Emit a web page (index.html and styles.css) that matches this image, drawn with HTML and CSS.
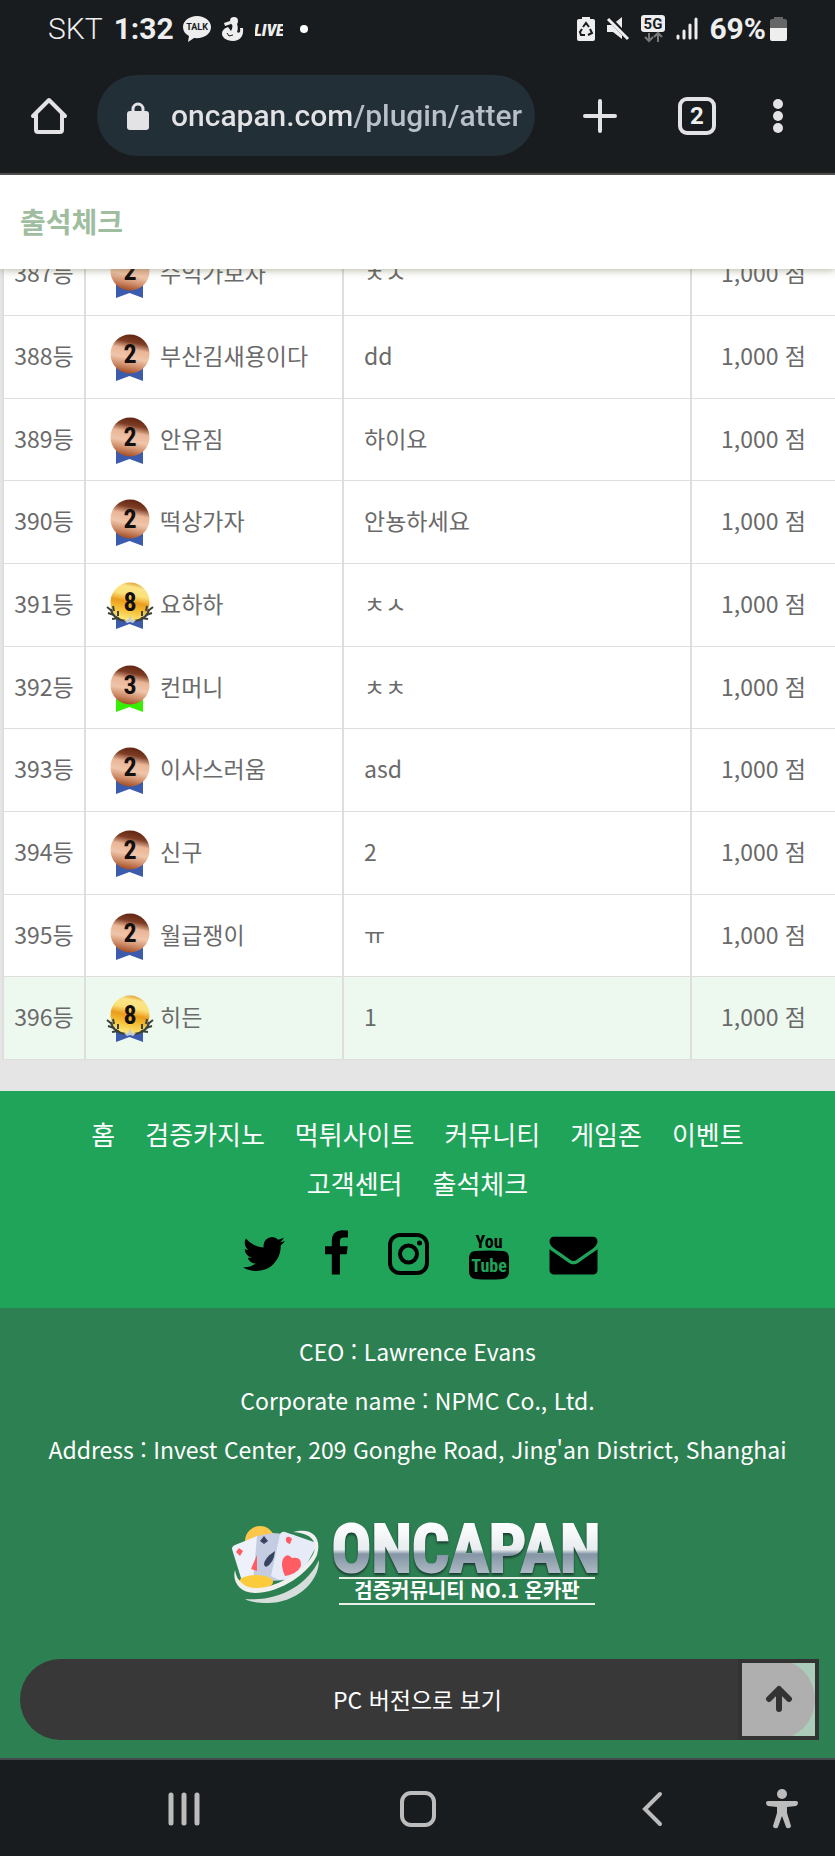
FILE: index.html
```html
<!DOCTYPE html>
<html lang="ko">
<head>
<meta charset="utf-8">
<meta name="viewport" content="width=device-width, initial-scale=1">
<title>출석체크</title>
<link rel="stylesheet" href="styles.css">
</head>
<body>
<svg class="sprite" aria-hidden="true">
  <defs>
    <linearGradient id="bronze" x1="0.6" y1="0" x2="0.4" y2="1">
      <stop offset="0" stop-color="#5f2410"/><stop offset="0.2" stop-color="#7d3d25"/>
      <stop offset="0.38" stop-color="#e9b596"/><stop offset="0.6" stop-color="#f0c5aa"/>
      <stop offset="0.8" stop-color="#cf8d6a"/><stop offset="1" stop-color="#a04a20"/>
    </linearGradient>
    <linearGradient id="gold" x1="0.6" y1="0" x2="0.4" y2="1">
      <stop offset="0" stop-color="#e0a030"/><stop offset="0.12" stop-color="#fbe488"/>
      <stop offset="0.32" stop-color="#fbe078"/><stop offset="0.5" stop-color="#eb9c1c"/>
      <stop offset="0.7" stop-color="#f5bf35"/><stop offset="1" stop-color="#fff088"/>
    </linearGradient>
    <linearGradient id="chrome" x1="0" y1="0" x2="0" y2="1">
      <stop offset="0.15" stop-color="#ffffff"/><stop offset="0.5" stop-color="#e8ecef"/>
      <stop offset="0.56" stop-color="#8495a5"/><stop offset="0.85" stop-color="#b5c0c9"/>
    </linearGradient>
    <symbol id="medal2" viewBox="0 0 48 48">
      <path d="M10 30h27v17l-13.500-5L10 47z" fill="#3c5bac"/>
      <circle cx="24" cy="20" r="19.500" fill="url(#bronze)"/>
      <text class="medal-no" x="24" y="29">2</text>
    </symbol>
    <symbol id="medal3" viewBox="0 0 48 48">
      <path d="M10 30h27v17l-13.500-5L10 47z" fill="#38ee05"/>
      <circle cx="24" cy="20" r="19.500" fill="url(#bronze)"/>
      <text class="medal-no" x="24" y="29">3</text>
    </symbol>
    <symbol id="medal8" viewBox="0 0 48 48">
      <path d="M10 30h27v17l-13.500-5L10 47z" fill="#3c5bac"/>
      <circle cx="24" cy="20" r="19.500" fill="url(#gold)"/>
      <g fill="none" stroke="#3d4237" stroke-width="2">
        <path d="M5 27c1 6 6 11 15 12M43 27c-1 6-6 11-15 12"/>
        <path d="M1 25l5 4M2 31l6 2M6 37l7-1M7 24l1 5M12 29l0 5M47 25l-5 4M46 31l-6 2M42 37l-7-1M41 24l-1 5M36 29l0 5"/>
      </g>
      <path d="M24 34l2 4 4 0-3 3-3-1-3 1-3-3 4 0z" fill="#c6cad2"/>
      <text class="medal-no" x="24" y="29">8</text>
    </symbol>
  </defs>
</svg>

<header class="chrome">
  <div class="status">
    <div class="status-side">
      <span class="carrier">SKT</span>
      <span class="clock">1:32</span>
      <svg class="ic-talk" width="28" height="26" viewBox="0 0 28 26"><path d="M14 0C6 0 0 5 0 11c0 4 2 7 6 9l-1 6 6-4c10 1 17-4 17-11C28 5 22 0 14 0z" fill="#eee"/><text x="14" y="14" class="t-talk">TALK</text></svg>
      <svg class="ic-carrot" width="22" height="26" viewBox="0 0 22 26" fill="#eee"><circle cx="12" cy="5" r="4"/><path d="M10 8h5c1 3 1 5 0 8 2 2 4 0 3-4l3 0c1 8-3 13-10 13-7 0-11-4-11-7 0-4 3-6 6-7l3 4c1-2 2-4 1-7z"/><path d="M2 7l6-2 1 3-6 2z"/><path d="M5 17l2 3 4-1" fill="none" stroke="#191c1e" stroke-width="1"/></svg>
      <svg width="28" height="26" viewBox="0 0 28 26"><text x="14" y="20" class="t-live">LIVE</text></svg>
      <svg class="ic-dot" width="8" height="8" viewBox="0 0 8 8"><circle cx="4" cy="4" r="4" fill="#fff"/></svg>
    </div>
    <div class="status-side status-right">
      <svg width="18" height="26" viewBox="0 0 18 26"><path d="M5 1h8v2h3q2 0 2 2v18q0 2-2 2H2q-2 0-2-2V5q0-2 2-2h3z" fill="#eee"/><path d="M6 11l3-4 3 4M13 13l2 4-4 2M8 19H4l-1-3 2-3" fill="none" stroke="#191c1e" stroke-width="2"/></svg>
      <svg width="24" height="26" viewBox="0 0 24 26"><path d="M1 9h5l10-8v22l-9-7H1z" fill="#eee"/><path d="M1 0l22 23" stroke="#191c1e" stroke-width="5"/><path d="M2 3l20 20" stroke="#eee" stroke-width="3"/></svg>
      <svg width="24" height="28" viewBox="0 0 24 28"><rect width="24" height="17" rx="3" fill="#eee"/><text x="12" y="14" class="t-5g">5G</text><path d="M8 18v8m-4-4l4 4 4-4M17 27v-9m-4 4l4-4 4 4" stroke="#777" stroke-width="2" fill="none"/></svg>
      <svg width="22" height="24" viewBox="0 0 22 24" stroke="#eee" stroke-width="3" stroke-linecap="round"><path d="M2 19v2M8 14v7M14 8v13M20 2v19"/></svg>
      <span class="percent">69%</span>
      <svg width="17" height="26" viewBox="0 0 17 26"><path d="M4 1h9v2h2q2 0 2 2v7H0V5q0-2 2-2h2z" fill="#666"/><path d="M0 12h17v11q0 2-2 2H2q-2 0-2-2z" fill="#eee"/></svg>
    </div>
  </div>
  <div class="toolbar">
    <button class="icon-btn" type="button" aria-label="홈페이지"><svg width="38" height="38" viewBox="0 0 38 38" fill="none" stroke="#e3e3e5" stroke-width="4" stroke-linecap="round" stroke-linejoin="round"><path d="M3 19L19 3l16 16M6 17v16q0 2 2 2h22q2 0 2-2V17"/></svg></button>
    <label class="omnibox">
      <svg width="22" height="28" viewBox="0 0 22 28"><rect y="9" width="22" height="19" rx="3" fill="#e3e3e5"/><path d="M6 10V7a5 5 0 0 1 10 0v3" fill="none" stroke="#e3e3e5" stroke-width="3"/></svg>
      <input class="url" type="text" aria-label="주소" value="oncapan.com/plugin/atter">
    </label>
    <button class="icon-btn" type="button" aria-label="새 탭"><svg width="34" height="34" viewBox="0 0 34 34" stroke="#e3e3e5" stroke-width="4" stroke-linecap="round"><path d="M17 2v30M2 17h30"/></svg></button>
    <button class="icon-btn" type="button" aria-label="탭 목록"><span class="tab-count">2</span></button>
    <button class="icon-btn" type="button" aria-label="메뉴"><svg width="10" height="34" viewBox="0 0 10 34" fill="#e3e3e5"><circle cx="5" cy="5" r="5"/><circle cx="5" cy="17" r="5"/><circle cx="5" cy="29" r="5"/></svg></button>
  </div>
</header>

<h1 class="page-title">출석체크</h1>

<main class="board">
  <table class="ranks">
    <colgroup><col class="c-rank"><col class="c-name"><col><col class="c-point"></colgroup>
    <tbody>
      <tr><td>387등</td><td><div class="member"><svg class="medal"><use href="#medal2"/></svg>수익가보자</div></td><td>ㅊㅅ</td><td>1,000 점</td></tr>
      <tr><td>388등</td><td><div class="member"><svg class="medal"><use href="#medal2"/></svg>부산김새용이다</div></td><td>dd</td><td>1,000 점</td></tr>
      <tr><td>389등</td><td><div class="member"><svg class="medal"><use href="#medal2"/></svg>안유짐</div></td><td>하이요</td><td>1,000 점</td></tr>
      <tr><td>390등</td><td><div class="member"><svg class="medal"><use href="#medal2"/></svg>떡상가자</div></td><td>안뇽하세요</td><td>1,000 점</td></tr>
      <tr><td>391등</td><td><div class="member"><svg class="medal"><use href="#medal8"/></svg>요하하</div></td><td>ㅊㅅ</td><td>1,000 점</td></tr>
      <tr><td>392등</td><td><div class="member"><svg class="medal"><use href="#medal3"/></svg>컨머니</div></td><td>ㅊㅊ</td><td>1,000 점</td></tr>
      <tr><td>393등</td><td><div class="member"><svg class="medal"><use href="#medal2"/></svg>이사스러움</div></td><td>asd</td><td>1,000 점</td></tr>
      <tr><td>394등</td><td><div class="member"><svg class="medal"><use href="#medal2"/></svg>신구</div></td><td>2</td><td>1,000 점</td></tr>
      <tr><td>395등</td><td><div class="member"><svg class="medal"><use href="#medal2"/></svg>월급쟁이</div></td><td>ㅠ</td><td>1,000 점</td></tr>
      <tr class="mine"><td>396등</td><td><div class="member"><svg class="medal"><use href="#medal8"/></svg>히든</div></td><td>1</td><td>1,000 점</td></tr>
    </tbody>
  </table>
</main>

<footer>
  <div class="foot-menu">
    <nav class="links">
      <a href="#">홈</a><a href="#">검증카지노</a><a href="#">먹튀사이트</a><a href="#">커뮤니티</a><a href="#">게임존</a><a href="#">이벤트</a><a href="#">고객센터</a><a href="#">출석체크</a>
    </nav>
    <div class="social">
      <a href="#" aria-label="Twitter"><svg width="42" height="48" viewBox="108 0 1576 1792"><path d="M1684 408q-67 98-162 167 1 14 1 42 0 130-38 259.500t-115.500 248.500-184.500 210.500-258 146-323 54.500q-271 0-496-145 35 4 78 4 225 0 401-138-105-2-188-64.500t-114-159.500q33 5 61 5 43 0 85-11-112-23-185.500-111.500t-73.500-205.500v-4q68 38 146 41-66-44-105-115t-39-154q0-88 44-163 121 149 294.500 238.500t371.500 99.500q-8-38-8-74 0-134 94.500-228.500t228.500-94.500q140 0 236 102 109-21 205-78-37 115-142 178 93-10 186-50z"/></svg></a>
      <a href="#" aria-label="Facebook"><svg width="23" height="48" viewBox="479 0 864 1792"><path d="M1343 12v264h-157q-86 0-116 36t-30 108v189h293l-39 296h-254v759h-306v-759h-255v-296h255v-218q0-186 104-288.500t277-102.500q147 0 228 12z"/></svg></a>
      <a href="#" aria-label="Instagram"><svg width="41" height="48" viewBox="0 0 41 48"><rect x="2" y="5" width="37" height="38" rx="10" fill="none" stroke="#000" stroke-width="4"/><circle cx="20.500" cy="24" r="8.500" fill="none" stroke="#000" stroke-width="4"/><circle cx="31.500" cy="13" r="2.500"/></svg></a>
      <a href="#" aria-label="YouTube"><svg width="40" height="50" viewBox="0 0 40 50"><text x="20" y="18" class="t-you">You</text><path d="M6 21q14-1 28 0 5 0 6 6 .5 8 0 16-1 5-6 6-14 1-28 0-5-1-6-6-.5-8 0-16 1-6 6-6z"/><text x="20" y="42" class="t-tube">Tube</text></svg></a>
      <a href="#" aria-label="Email"><svg width="49" height="48" viewBox="0 0 1792 1792"><path d="M1792 710v794q0 66-47 113t-113 47h-1472q-66 0-113-47t-47-113v-794q44 49 101 87 362 246 497 345 57 42 92.500 65.500t94.500 48 110 24.500h2q51 0 110-24.500t94.500-48 92.500-65.500q170-123 498-345 57-39 100-87zm0-294q0 79-49 151t-122 123q-376 261-468 325-10 7-42.500 31t-54 38.500-52 32.500-57.500 27-50 9h-2q-23 0-50-9t-57.500-27-52-32.500-54-38.500-42.500-31q-91-64-262-182.500t-205-142.500q-62-42-117-115.500t-55-136.500q0-78 41.500-130t118.500-52h1472q65 0 112.500 47t47.500 113z"/></svg></a>
    </div>
  </div>
  <div class="foot-info">
    <p>CEO : Lawrence Evans</p>
    <p>Corporate name : NPMC Co., Ltd.</p>
    <p>Address : Invest Center, 209 Gonghe Road, Jing'an District, Shanghai</p>
    <svg class="logo" width="374" height="106" viewBox="0 -16 374 106" role="img" aria-label="ONCAPAN">
      <circle cx="29" cy="17" r="15" fill="#fbc64a"/>
      <path d="M1 25q0-3 3-4l22-9 14 45-26 10z" fill="#eef1fa"/>
      <path d="M26 12l16-3 22 2-8 45-34 2z" fill="#c3cce0"/>
      <path d="M49 10q2-3 5-2l29 10q3 2 2 5L72 47q-9 8-24 9l-8-4z" fill="#e7ebf8"/>
      <path d="M5 28l3-4 4 3-3 5zM20 45l6-14 0 16z" fill="#ff5d63"/>
      <path d="M29 17l4-5 4 5-4 3zM33 41q0-7 11-14-1 12-9 16z" fill="#39435f"/>
      <path d="M55 14q3-3 6 1l-2 5q-5-1-4-6zM52 35q4-7 9-1 10-2 9 8-4 8-16 10-5-11-2-17z" fill="#ff5d63"/>
      <ellipse cx="25" cy="58" rx="17" ry="7" fill="#fccb3c"/>
      <path d="M62 8c20-5 29 6 24 23C79 48 50 69 24 69 8 69 1 57 4 46c2 14 14 21 31 17 24-6 43-22 48-35 4-12-5-19-21-20z" fill="#f0f0ee"/>
      <path d="M14 75c32 3 62-13 74-39 0 24-25 43-51 43-10 0-18-1-23-4z" fill="#d7ddda"/>
      <text x="235" y="48" class="t-brand">ONCAPAN</text>
      <path d="M108 54h256M108 80h256" stroke="#e8efe9" stroke-width="2"/>
      <text x="236" y="74" class="t-slogan">검증커뮤니티 NO.1 온카판</text>
    </svg>
    <div class="actions">
      <button class="pc-btn" type="button">PC 버전으로 보기</button>
      <button class="top-btn" type="button" aria-label="위로"><svg width="28" height="28" viewBox="0 0 28 28" fill="none" stroke="#333" stroke-width="6" stroke-linecap="round" stroke-linejoin="round"><path d="M14 24V5M4 14L14 4l10 10"/></svg></button>
    </div>
  </div>
</footer>

<div class="softkeys">
  <button class="icon-btn k-recent" type="button" aria-label="최근 앱"><svg width="34" height="36" viewBox="0 0 34 36" stroke="#bcbcbc" stroke-width="5" stroke-linecap="round"><path d="M4 4v28M17 4v28M30 4v28"/></svg></button>
  <button class="icon-btn k-home" type="button" aria-label="홈"><svg width="38" height="38" viewBox="0 0 38 38"><rect x="3" y="3" width="32" height="32" rx="9" fill="none" stroke="#bcbcbc" stroke-width="4"/></svg></button>
  <button class="icon-btn k-back" type="button" aria-label="뒤로"><svg width="22" height="36" viewBox="0 0 22 36" fill="none" stroke="#bcbcbc" stroke-width="4" stroke-linecap="round"><path d="M19 3L4 18l15 15"/></svg></button>
  <button class="icon-btn k-access" type="button" aria-label="접근성"><svg width="32" height="40" viewBox="0 0 32 40" fill="#bcbcbc"><circle cx="16" cy="5" r="5"/><path d="M2 12h28q2 0 2 2t-2 3l-9 1v6l4 13q0 2-2 2-2 1-3-1l-4-11-4 11q-1 2-3 1-2 0-2-2l4-13v-6l-9-1q-2-1-2-3t2-2z"/></svg></button>
</div>
</body>
</html>
```
FILE: styles.css
```css
* { box-sizing: border-box; }

body {
  margin: 0;
  background: #e5e5e5;
  color: #6a6a6a;
  font-family: "Noto Sans CJK KR", sans-serif;
  font-size: 23px;
  line-height: 34px;
}

button {
  padding: 0;
  border: 0;
  background: none;
  color: inherit;
  font: inherit;
}

a { color: inherit; text-decoration: none; }
svg { display: block; flex: none; }

.sprite { position: absolute; width: 0; height: 0; }

/* Browser chrome */
.chrome {
  background: #191c1e;
  border-bottom: 2px solid #4a4d52;
  color: #eee;
  font-family: Roboto, sans-serif;
}

.status {
  display: flex;
  justify-content: space-between;
  height: 58px;
  padding: 0 48px;
}

.status-side { display: flex; align-items: center; }
.carrier { font-size: 30px; font-weight: 300; }
.clock { margin: 0 9px 0 11px; font-size: 30px; font-weight: 700; }
.ic-carrot { margin: 0 11px; }
.ic-dot { margin-left: 17px; }
.status-right { gap: 11px; }
.percent { margin-right: -7px; font-size: 30px; font-weight: 700; }

.t-talk, .t-live, .t-5g, .t-you, .t-tube, .medal-no,
.t-brand, .t-slogan { text-anchor: middle; }
.t-talk { font: 700 9px Roboto, sans-serif; fill: #191c1e; }
.t-live { font: italic 900 17px "Liberation Sans Narrow", "Roboto Condensed", sans-serif; fill: #eee; }
.t-5g { font: 700 15px Roboto, sans-serif; fill: #191c1e; }

.toolbar {
  display: grid;
  grid-template-columns: 97px minmax(0, 1fr) 130px 64px 98px;
  padding: 17px 8px 17px 0;
}

.icon-btn {
  display: flex;
  align-items: center;
  justify-content: center;
}

.omnibox {
  display: flex;
  align-items: center;
  gap: 22px;
  height: 81px;
  padding: 0 12px 0 30px;
  border-radius: 41px;
  background: #232f36;
}

.url {
  flex: 1;
  min-width: 0;
  padding: 0;
  border: 0;
  outline: 0;
  background: linear-gradient(90deg, #e3e3e5 180px, #b9c0ca 180px);
  background-clip: text;
  -webkit-background-clip: text;
  color: transparent;
  font: 500 30px/40px Roboto, sans-serif;
}

.tab-count {
  width: 38px;
  height: 38px;
  border: 4px solid #e3e3e5;
  border-radius: 9px;
  font-size: 24px;
  font-weight: 700;
  line-height: 30px;
}

/* Page heading */
.page-title {
  position: relative;
  z-index: 1;
  margin: 0;
  padding: 26px 20px 28px;
  background: #fff;
  box-shadow: 0 1px 8px rgba(90, 90, 50, .45);
  color: #9fbd9f;
  font-size: 28px;
  line-height: 40px;
}

/* Attendance ranking */
.board {
  margin-top: -37px;
  padding: 0 0 31px 2px;
  overflow: hidden;
}

.ranks {
  width: 100%;
  border-collapse: collapse;
  table-layout: fixed;
  background: #fff;
}

.ranks td {
  height: 83px;
  padding: 0 20px 3px;
  border: solid #dedede;
  border-width: 0 0 1px 2px;
}

.ranks tr:nth-child(3n) td { height: 82px; }
.ranks td:first-child, .ranks td:last-child { padding: 0 0 3px; text-align: center; }
.c-rank { width: 82px; }
.c-name { width: 258px; }
.c-point { width: 144px; }
.mine { background: #edf8ef; }
.member { display: flex; align-items: center; gap: 6px; white-space: nowrap; }
.medal { width: 48px; height: 48px; margin-top: 6px; }
.medal-no { font: 700 26px "Liberation Sans Narrow", "Roboto Condensed", sans-serif; fill: #151010; }

/* Footer */
.foot-menu { padding: 18px 40px 28px; background: #1fa45a; color: #fff; }

.links {
  display: flex;
  flex-wrap: wrap;
  justify-content: center;
  column-gap: 30px;
  font-size: 26px;
  line-height: 49px;
}

.social { display: flex; justify-content: center; gap: 40px; margin-top: 23px; padding-left: 5px; }
.t-you { font: 700 18px "Liberation Sans Narrow", "Roboto Condensed", sans-serif; }
.t-tube { font: 700 18px "Liberation Sans Narrow", "Roboto Condensed", sans-serif; fill: #1fa45a; }

.foot-info {
  padding: 19px 20px 18px;
  background: #2d8051;
  color: #fff;
  text-align: center;
}

.foot-info p { margin: 0; line-height: 49px; }
.logo { margin: 34px auto 45px; }
.t-brand {
  font: 700 66px "Liberation Sans Narrow", "Roboto Condensed", sans-serif;
  fill: url(#chrome);
  stroke: url(#chrome);
  stroke-width: 2px;
  filter: drop-shadow(0 2px 1px rgba(20, 40, 40, .8));
}
.t-slogan { font: 700 20px "Noto Sans CJK KR", sans-serif; fill: #fff; }

.actions { position: relative; }

.pc-btn {
  display: block;
  width: 100%;
  height: 81px;
  border-radius: 41px;
  background: #383838;
}

.top-btn {
  position: absolute;
  top: 0;
  right: -4px;
  display: flex;
  align-items: center;
  justify-content: center;
  width: 81px;
  height: 81px;
  border: 4px solid #333;
  background: rgba(255, 255, 255, .6);
}

/* System navigation keys */
.softkeys {
  display: grid;
  grid-template-columns: 160fr 48px 186fr 48px 186fr 48px 82fr 48px 29fr;
  padding: 24px 0;
  border-top: 2px solid #454a4d;
  background: #191c1e;
}

.softkeys .icon-btn { height: 50px; }
.k-recent { grid-column: 2; }
.k-home { grid-column: 4; }
.k-back { grid-column: 6; }
.k-access { grid-column: 8; }
```
